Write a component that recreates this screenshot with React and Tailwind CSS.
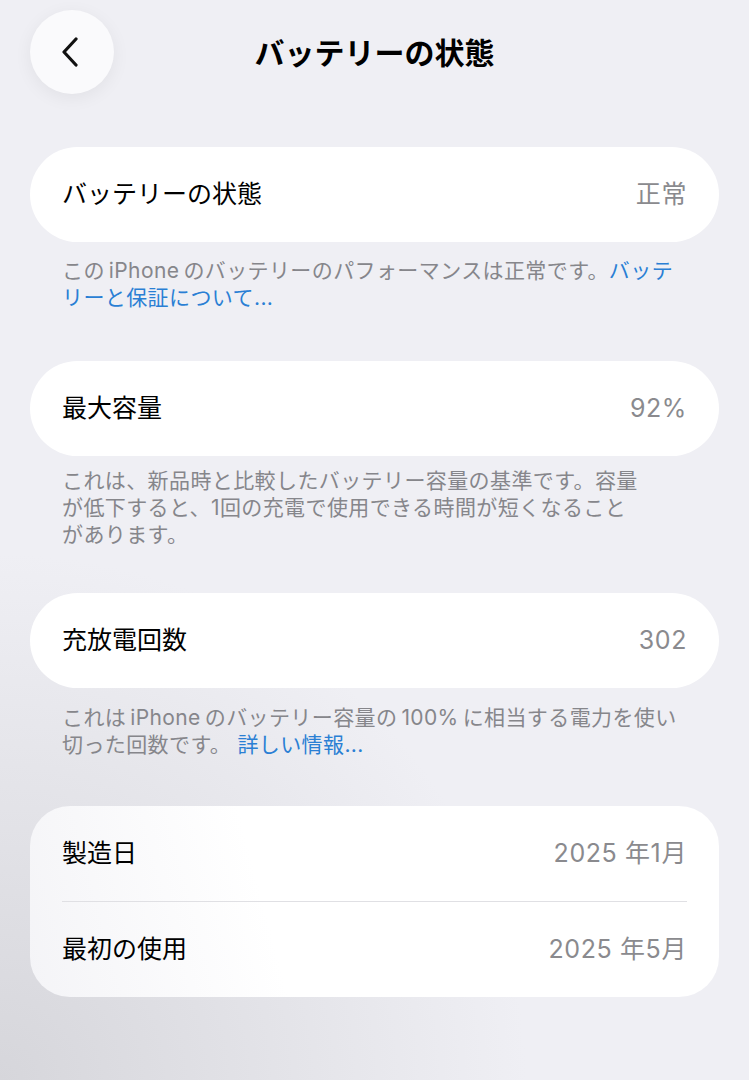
import React from 'react'

const font = { fontFamily: 'Inter, "Noto Sans CJK JP", sans-serif' }

function Row({ label, value }) {
  return (
    <div className="flex h-[95px] items-center justify-between px-[32px]">
      <span className="text-[25px] text-black">{label}</span>
      <span className="text-[25px] tracking-[0.6px] text-[#8a8a8e]">{value}</span>
    </div>
  )
}

function Note({ children, className = '' }) {
  return (
    <p className={`px-[32px] text-[21px] leading-[27px] tracking-[0.4px] text-[#86868b] ${className}`}>
      {children}
    </p>
  )
}

const Gap = () => <span className="inline-block w-[4px]" />

export default function App() {
  return (
    <div
      className="h-[1080px] w-full overflow-hidden bg-[radial-gradient(circle_at_0%_100%,#d6d6db_0%,#efeff4_40%)] bg-[#efeff4]"
      style={font}
    >
      {/* header */}
      <div className="relative flex h-[104px] items-start px-[30px] pt-[10px]">
        <button className="flex h-[84px] w-[84px] items-center justify-center rounded-full bg-[#fafafc] shadow-[0_4px_18px_rgba(0,0,0,0.06)]">
          <svg width="22" height="30" viewBox="0 0 22 30" fill="none" className="-ml-[4px]">
            <path d="M17 2 L5 15 L17 28" stroke="#111" strokeWidth="3.2" strokeLinecap="round" strokeLinejoin="round" />
          </svg>
        </button>
        <h1 className="absolute left-0 right-0 top-[31px] text-center text-[30px] font-bold leading-[44px] text-black">
          バッテリーの状態
        </h1>
      </div>

      <div className="flex flex-col px-[30px] pt-[43px]">
        <div className="rounded-full bg-white">
          <Row label="バッテリーの状態" value="正常" />
        </div>
        <Note className="mt-[15px] whitespace-nowrap">
          この<Gap />iPhone<Gap />のバッテリーのパフォーマンスは正常です。<span className="text-[#2a7fd4]">バッテ</span>
          <br />
          <span className="text-[#2a7fd4]">リーと保証について...</span>
        </Note>

        <div className="mt-[50px] rounded-full bg-white">
          <Row label="最大容量" value="92%" />
        </div>
        <Note className="mt-[11px] whitespace-nowrap">
          これは、新品時と比較したバッテリー容量の基準です。容量
          <br />
          が低下すると、1回の充電で使用できる時間が短くなること
          <br />
          があります。
        </Note>

        <div className="mt-[45px] rounded-full bg-white">
          <Row label="充放電回数" value="302" />
        </div>
        <Note className="mt-[16px] whitespace-nowrap">
          これは<Gap />iPhone<Gap />のバッテリー容量の<Gap />100%<Gap />に相当する電力を使い
          <br />
          切った回数です。 <span className="text-[#2a7fd4]">詳しい情報...</span>
        </Note>

        <div className="mt-[48px] rounded-[40px] bg-[linear-gradient(75deg,#f4f4f7_0%,#ffffff_35%,#ffffff_100%)]">
          <Row label="製造日" value="2025 年1月" />
          <div className="mx-[32px] h-px bg-[#e0e0e4]" />
          <Row label="最初の使用" value="2025 年5月" />
        </div>
      </div>
    </div>
  )
}
